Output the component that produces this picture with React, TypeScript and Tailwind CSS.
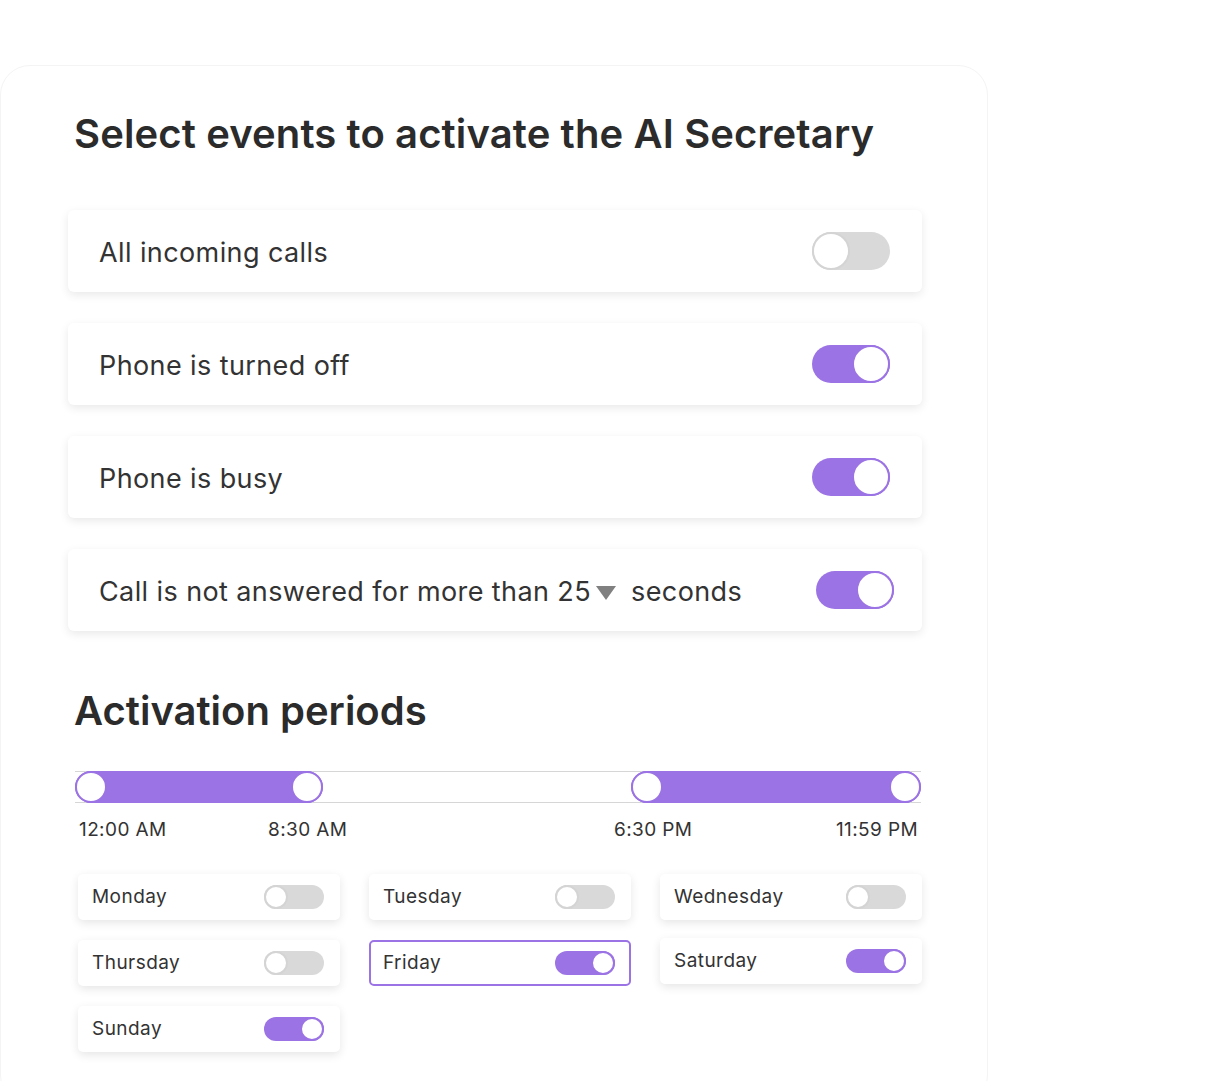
import React from 'react'

const PURPLE = 'bg-[#9b73e4]'

function Toggle({ on, big }: { on: boolean; big?: boolean }) {
  const size = big ? 'w-[78px] h-[38px]' : 'w-[60px] h-[24px]'
  const knob = big ? 'w-[38px] h-[38px]' : 'w-[24px] h-[24px]'
  return (
    <div
      className={`${size} rounded-full flex items-center shrink-0 ${on ? `${PURPLE} justify-end` : 'bg-[#d9d9d9] justify-start'}`}
    >
      <div
        className={`${knob} rounded-full bg-white border-2 ${on ? 'border-[#9b73e4]' : 'border-[#d4d4d4]'}`}
      />
    </div>
  )
}

function EventRow({ children, on, shift }: { children: React.ReactNode; on: boolean; shift?: boolean }) {
  return (
    <div className="h-[82px] bg-white rounded-[6px] shadow-[0_3px_10px_rgba(0,0,0,0.09)] flex items-center justify-between pl-[31px] pr-[32px]">
      <div className="pt-[5px] text-[27px] tracking-[0.4px] text-[#333333] flex items-center">{children}</div>
      <div className={shift ? 'mr-[-4px]' : ''}>
        <Toggle on={on} big />
      </div>
    </div>
  )
}

function DayCard({ name, on, active, extra }: { name: string; on: boolean; active?: boolean; extra?: string }) {
  return (
    <div
      className={`h-[46px] rounded-[5px] bg-white flex items-center justify-between ${
        active ? 'border-2 border-[#9b73e4] pl-[12px] pr-[14px]' : 'pl-[14px] pr-[16px] shadow-[0_3px_10px_rgba(0,0,0,0.1)]'
      } ${extra ?? ''}`}
    >
      <span className="pt-[1px] text-[19px] tracking-[0.45px] text-[#333333]">{name}</span>
      <Toggle on={on} />
    </div>
  )
}

export default function App() {
  const days = [
    { name: 'Monday', on: false },
    { name: 'Tuesday', on: false },
    { name: 'Wednesday', on: false },
    { name: 'Thursday', on: false },
    { name: 'Friday', on: true, active: true },
    { name: 'Saturday', on: true, extra: 'mt-[-2px] mb-[2px]' },
    { name: 'Sunday', on: true },
  ]

  return (
    <div className="w-[1205px] h-[1081px] bg-white overflow-hidden pt-[65px]" style={{ fontFamily: 'Inter, "Noto Sans", sans-serif' }}>
      <div className="w-[988px] h-[1040px] rounded-[30px] border border-[#f4f4f4] pt-[44px] pl-[67px] pr-[65px]">
        <h1 className="text-[40px] leading-[48px] font-semibold text-[#2b2b2b] ml-[6px] tracking-[0.12px]">
          Select events to activate the AI Secretary
        </h1>

        <div className="mt-[52px] flex flex-col gap-[31px]">
          <EventRow on={false}>All incoming calls</EventRow>
          <EventRow on={true}>Phone is turned off</EventRow>
          <EventRow on={true}>Phone is busy</EventRow>
          <EventRow on={true} shift>
            Call is not answered for more than 25
            <svg width="22" height="16" viewBox="0 0 22 16" className="ml-[4px] mr-[14px]">
              <polygon points="1,1 21,1 11,15" fill="#808080" />
            </svg>
            seconds
          </EventRow>
        </div>

        <h2 className="mt-[56px] text-[40px] leading-[48px] font-semibold text-[#2b2b2b] ml-[6px]">
          Activation periods
        </h2>

        {/* range slider */}
        <div className="mt-[36px] ml-[7px] w-[846px] relative h-[32px]">
          <div className="absolute left-0 right-0 top-0 bottom-0 border-y border-[#d6d6d6]" />
          <div className={`absolute left-0 top-0 h-[32px] w-[248px] rounded-full ${PURPLE}`} />
          <div className={`absolute left-[556px] top-0 h-[32px] w-[290px] rounded-full ${PURPLE}`} />
          <div className="absolute left-0 top-0 w-[32px] h-[32px] rounded-full bg-white border-2 border-[#9b73e4]" />
          <div className="absolute left-[216px] top-0 w-[32px] h-[32px] rounded-full bg-white border-2 border-[#9b73e4]" />
          <div className="absolute left-[556px] top-0 w-[32px] h-[32px] rounded-full bg-white border-2 border-[#9b73e4]" />
          <div className="absolute left-[814px] top-0 w-[32px] h-[32px] rounded-full bg-white border-2 border-[#9b73e4]" />
        </div>
        <div className="ml-[7px] w-[846px] relative h-[24px] mt-[15px] text-[19px] tracking-[0.4px] leading-[24px] text-[#333333]">
          <span className="absolute left-[4px]">12:00 AM</span>
          <span className="absolute left-[193px]">8:30 AM</span>
          <span className="absolute left-[539px]">6:30 PM</span>
          <span className="absolute right-[3px]">11:59 PM</span>
        </div>

        <div className="mt-[32px] ml-[10px] grid grid-cols-[262px_262px_262px] gap-x-[29px] gap-y-[20px] w-[844px]">
          {days.map((d) => (
            <DayCard key={d.name} name={d.name} on={d.on} active={d.active} extra={d.extra} />
          ))}
        </div>
      </div>
    </div>
  )
}
